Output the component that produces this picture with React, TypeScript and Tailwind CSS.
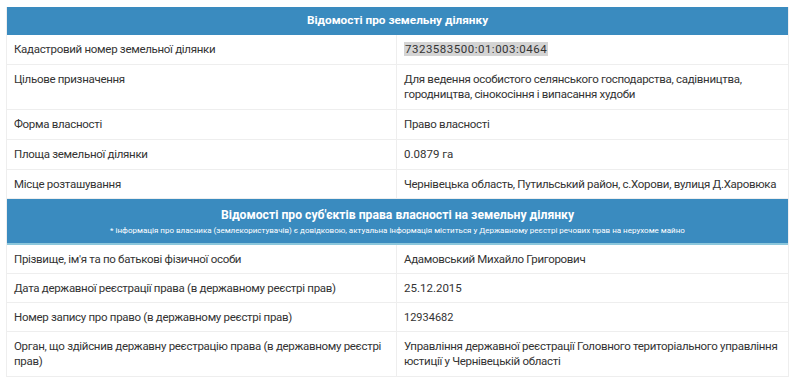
import React from "react";

const landRows: [string, React.ReactNode][] = [
  [
    "Кадастровий номер земельної ділянки",
    <span className="bg-[#d4d4d4] text-[11.5px] tracking-[0.5px] px-px">7323583500:01:003:0464</span>,
  ],
  [
    "Цільове призначення",
    "Для ведення особистого селянського господарства, садівництва, городництва, сінокосіння і випасання худоби",
  ],
  ["Форма власності", "Право власності"],
  ["Площа земельної ділянки", <span className="text-[11.5px] tracking-normal">0.0879 га</span>],
  ["Місце розташування", "Чернівецька область, Путильський район, с.Хорови, вулиця Д.Харовюка"],
];

const ownerRows: [string, React.ReactNode][] = [
  ["Прізвище, ім'я та по батькові фізичної особи", "Адамовський Михайло Григорович"],
  ["Дата державної реєстрації права (в державному реєстрі прав)", <span className="text-[11.5px] tracking-normal">25.12.2015</span>],
  ["Номер запису про право (в державному реєстрі прав)", <span className="text-[11px] tracking-normal">12934682</span>],
  [
    "Орган, що здійснив державну реєстрацію права (в державному реєстрі прав)",
    "Управління державної реєстрації Головного територіального управління юстиції у Чернівецькій області",
  ],
];

const Row = ({ label, value, tight }: { label: string; value: React.ReactNode; tight?: boolean }) => (
  <div className="grid grid-cols-[390px_1fr] border-b border-[#eeeeee]">
    <div className={`px-[7px] border-r border-[#eeeeee] leading-[15px] ${tight ? "pt-[7px] pb-[6px]" : "py-[7px]"}`}>{label}</div>
    <div className={`px-[7px] leading-[15px] ${tight ? "pt-[7px] pb-[6px]" : "py-[7px]"}`}>{value}</div>
  </div>
);

export default function App() {
  return (
    <div
      className="bg-white w-[795px] h-[382px] pt-[7px] pl-[6px] text-[11.5px] tracking-[-0.3px] text-[#333333] overflow-hidden"
      style={{ fontFamily: "Roboto, 'Open Sans', sans-serif" }}
    >
      <div className="w-[783px] border-l border-r border-[#eeeeee]">
        <div className="bg-[#3a8bbf] text-white font-bold text-center h-[28px] flex items-center justify-center text-[11.8px] tracking-normal">
          Відомості про земельну ділянку
        </div>
        {landRows.map(([l, v], i) => (
          <Row key={i} label={l} value={v} tight={i === 4} />
        ))}
        <div className="bg-[#3a8bbf] text-white text-center h-[46px] flex flex-col items-center justify-center border-b-2 border-[#8cc7dc] tracking-normal">
          <div className="font-bold text-[12.2px] leading-[18px]">
            Відомості про суб'єктів права власності на земельну ділянку
          </div>
          <div className="text-[8px] leading-[13px]">
            * інформація про власника (землекористувачів) є довідковою, актуальна інформація міститься у Державному реєстрі речових прав на нерухоме майно
          </div>
        </div>
        {ownerRows.map(([l, v], i) => (
          <Row key={i} label={l} value={v} tight={i < 3} />
        ))}
      </div>
    </div>
  );
}
